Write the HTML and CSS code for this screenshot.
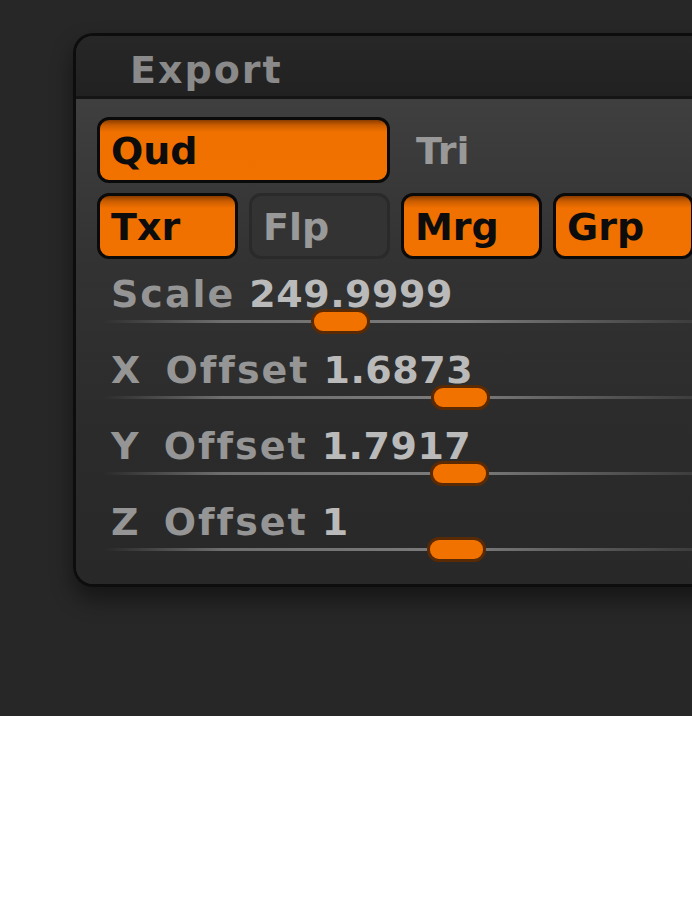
FILE: index.html
```html
<!DOCTYPE html>
<html lang="en">
<head>
    <meta charset="UTF-8">
    <meta name="viewport" content="width=device-width, initial-scale=1.0">
    <title>Export</title>
    <link rel="stylesheet" href="styles.css">
</head>
<body>
    <div class="stage">
        <div class="panel">
            <div class="panel-header">Export</div>
            <div class="panel-body">
                <div class="btn-row">
                    <div class="btn on wide">Qud</div>
                    <div class="toggle-label">Tri</div>
                </div>
                <div class="btn-row">
                    <div class="btn on">Txr</div>
                    <div class="btn">Flp</div>
                    <div class="btn on">Mrg</div>
                    <div class="btn on">Grp</div>
                </div>

                <div class="slider">
                    <div class="slider-label"><span class="name">Scale</span><span class="value">249.9999</span></div>
                    <div class="track-wrap">
                        <div class="track"></div>
                        <div class="thumb" style="left: 214px"></div>
                    </div>
                </div>
                <div class="slider">
                    <div class="slider-label"><span class="name">X Offset</span><span class="value">1.6873</span></div>
                    <div class="track-wrap">
                        <div class="track"></div>
                        <div class="thumb" style="left: 334px"></div>
                    </div>
                </div>
                <div class="slider">
                    <div class="slider-label"><span class="name">Y Offset</span><span class="value">1.7917</span></div>
                    <div class="track-wrap">
                        <div class="track"></div>
                        <div class="thumb" style="left: 333px"></div>
                    </div>
                </div>
                <div class="slider">
                    <div class="slider-label"><span class="name">Z Offset</span><span class="value">1</span></div>
                    <div class="track-wrap">
                        <div class="track"></div>
                        <div class="thumb" style="left: 330px"></div>
                    </div>
                </div>
            </div>
        </div>
    </div>
</body>
</html>
```

FILE: styles.css
```css
html {
    background-color: white;
}
body {
    margin: 0;
    font-family: "DejaVu Sans", "Liberation Sans", sans-serif;
    font-weight: bold;
}
.stage {
    height: 716px;
    background-color: #272727;
    padding: 33px 0 0 73px;
    box-sizing: border-box;
    overflow: hidden;
}
.panel {
    width: 700px;
    border: 3px solid #0d0d0d;
    border-right: none;
    border-radius: 20px 0 0 20px;
    overflow: hidden;
    box-shadow: 0 12px 22px rgba(0, 0, 0, 0.45);
}
.panel-header {
    height: 63px;
    box-sizing: border-box;
    padding: 8px 0 0 54px;
    line-height: 52px;
    font-size: 38px;
    letter-spacing: 2px;
    color: #8a8a8a;
    background: linear-gradient(#272727, #212121);
    border-bottom: 3px solid #151515;
}
.panel-body {
    height: 485px;
    box-sizing: border-box;
    padding: 18px 0 6px 21px;
    background: linear-gradient(#3f3f3f, #323232 35%, #2b2b2b 70%, #282828);
}
.btn-row {
    display: flex;
    gap: 11px;
    margin-bottom: 10px;
}
.btn {
    width: 141px;
    height: 66px;
    box-sizing: border-box;
    border: 3px solid #2a2a2a;
    border-radius: 12px;
    background-color: #333333;
    color: #999999;
    font-size: 38px;
    line-height: 62px;
    padding-left: 11px;
    flex-shrink: 0;
}
.btn.on {
    border-color: #0a0a0a;
    color: #0c0c0c;
    background: linear-gradient(#8a3c00, #c85c00 5px, #f07000 12px, #f27200);
}
.btn.wide {
    width: 293px;
}
.toggle-label {
    height: 66px;
    box-sizing: border-box;
    padding: 3px 0 0 15px;
    font-size: 38px;
    line-height: 62px;
    color: #999999;
}
.slider {
    height: 76px;
}
.btn-row + .slider {
    margin-top: 15px;
}
.slider-label {
    height: 40px;
    line-height: 40px;
    font-size: 38px;
    padding-left: 14px;
    white-space: nowrap;
}
.slider-label .name {
    color: #959595;
    letter-spacing: 2px;
    word-spacing: 8px;
}
.slider-label .value {
    color: #bababa;
    margin-left: 14px;
    letter-spacing: 0.5px;
}
.track-wrap {
    position: relative;
    height: 16px;
}
.track {
    position: absolute;
    left: 6px;
    top: 6px;
    width: 600px;
    height: 3px;
    background: linear-gradient(to right, rgba(90, 90, 90, 0), #6e6e6e 20%, #7c7c7c 60%, #3a3a3a 100%);
}
.thumb {
    position: absolute;
    top: -5px;
    width: 59px;
    height: 25px;
    box-sizing: border-box;
    border: 3px solid #5a2a04;
    border-radius: 12px;
    background-color: #f27200;
}
```
